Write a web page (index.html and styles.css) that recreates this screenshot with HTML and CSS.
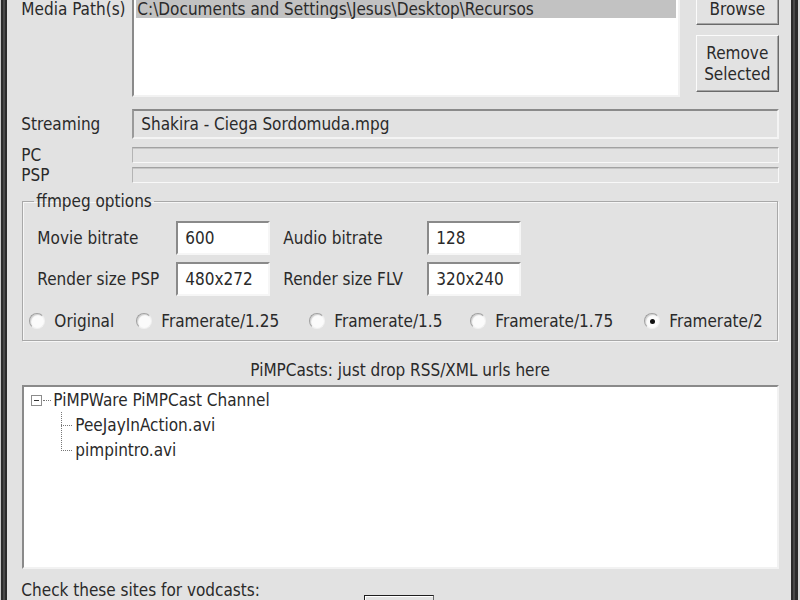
FILE: index.html
```html
<!DOCTYPE html>
<html lang="en">
<head>
    <meta charset="UTF-8">
    <title>PiMP - Media Paths</title>
    <link rel="stylesheet" href="styles.css">
</head>
<body>
    <div class="window">
        <div class="frame-left"></div>
        <div class="content">
            <!-- media paths -->
            <div class="paths-row">
                <div class="label paths-label">Media Path(s)</div>
                <div class="listbox">
                    <div class="list-item selected">C:\Documents and Settings\Jesus\Desktop\Recursos</div>
                </div>
                <div class="button-col">
                    <div class="btn browse">Browse</div>
                    <div class="btn remove">Remove<br>Selected</div>
                </div>
            </div>

            <!-- streaming status -->
            <div class="field-row stream-row">
                <div class="label side-label">Streaming</div>
                <div class="readonly">Shakira - Ciega Sordomuda.mpg</div>
            </div>
            <div class="field-row bar-row pc">
                <div class="label side-label">PC</div>
                <div class="progress"></div>
            </div>
            <div class="field-row bar-row psp">
                <div class="label side-label">PSP</div>
                <div class="progress"></div>
            </div>

            <!-- ffmpeg options -->
            <fieldset class="group">
                <legend>ffmpeg options</legend>
                <div class="opt-row">
                    <div class="label opt-label">Movie bitrate</div>
                    <div class="edit">600</div>
                    <div class="label opt-label2">Audio bitrate</div>
                    <div class="edit">128</div>
                </div>
                <div class="opt-row second">
                    <div class="label opt-label">Render size PSP</div>
                    <div class="edit">480x272</div>
                    <div class="label opt-label2">Render size FLV</div>
                    <div class="edit">320x240</div>
                </div>
                <div class="radio-row">
                    <div class="radio"><span class="dot"></span>Original</div>
                    <div class="radio"><span class="dot"></span>Framerate/1.25</div>
                    <div class="radio"><span class="dot"></span>Framerate/1.5</div>
                    <div class="radio"><span class="dot"></span>Framerate/1.75</div>
                    <div class="radio"><span class="dot checked"></span>Framerate/2</div>
                </div>
            </fieldset>

            <!-- pimpcasts -->
            <div class="label casts-label">PiMPCasts: just drop RSS/XML urls here</div>
            <div class="tree">
                <div class="tree-node">
                    <svg class="expander" width="11" height="11" viewBox="0 0 11 11">
                        <rect x="0.5" y="0.5" width="10" height="10" fill="#fff" stroke="#8c8c8c"/>
                        <line x1="3" y1="5.5" x2="8" y2="5.5" stroke="#333"/>
                    </svg>
                    <span class="dots-h"></span>PiMPWare PiMPCast Channel
                </div>
                <div class="tree-children">
                    <div class="tree-leaf"><span class="dots-h leaf"></span>PeeJayInAction.avi</div>
                    <div class="tree-leaf"><span class="dots-h leaf"></span>pimpintro.avi</div>
                </div>
            </div>

            <div class="label check-label">Check these sites for vodcasts:</div>
            <div class="bottom-btn"></div>
        </div>
        <div class="frame-right"></div>
    </div>
</body>
</html>
```

FILE: styles.css
```css
* {
    margin: 0;
    padding: 0;
    box-sizing: border-box;
}
html, body {
    width: 800px;
    height: 600px;
    overflow: hidden;
}
body {
    background: #e2e2e2;
    color: #2a2a2a;
    font-family: "DejaVu Sans Condensed", "DejaVu Sans", sans-serif;
    font-size: 17px;
}
.window {
    display: flex;
    height: 600px;
}
.frame-left {
    width: 8px;
    background: linear-gradient(to right, #c8c8c8 0, #c8c8c8 1px, #2c2c2c 1px, #2c2c2c 3px, #4a4a4a 3px, #4a4a4a 5px, #2c2c2c 5px, #2c2c2c 7px, #a8a8a8 7px);
}
.frame-right {
    width: 10px;
    background: linear-gradient(to right, #2c2c2c 0, #2c2c2c 2px, #4a4a4a 2px, #4a4a4a 4px, #2c2c2c 4px, #2c2c2c 7px, #dadada 7px);
}
.content {
    flex: 1;
    padding: 0 12px 0 14px;
}
.label {
    line-height: 18px;
    white-space: nowrap;
}

/* media paths */
.paths-row {
    display: flex;
    margin-top: -9px;
    align-items: flex-start;
}
.paths-label {
    width: 111px;
    flex: none;
    margin-top: 9px;
}
.listbox {
    flex: 1;
    height: 99px;
    margin-top: 7px;
    background: #fff;
    border: 2px solid;
    border-color: #8a8a8a #f2f2f2 #f2f2f2 #8a8a8a;
    padding: 0 2px;
}
.list-item {
    line-height: 17px;
    padding: 1px 0 0 1px;
    white-space: nowrap;
}
.list-item.selected {
    background: #c2c2c2;
}
.button-col {
    width: 83px;
    flex: none;
    margin-left: 16px;
    display: flex;
    flex-direction: column;
    gap: 10px;
}
.btn {
    background: #e2e2e2;
    border: 1px solid;
    border-color: #fbfbfb #6a6a6a #6a6a6a #fbfbfb;
    box-shadow: inset -1px -1px 0 #a6a6a6;
    text-align: center;
    display: flex;
    align-items: center;
    justify-content: center;
    line-height: 21px;
}
.browse {
    height: 34px;
    padding-top: 3px;
}
.remove {
    height: 57px;
}

/* streaming */
.field-row {
    display: flex;
    align-items: center;
}
.side-label {
    width: 111px;
    flex: none;
}
.stream-row {
    margin-top: 12px;
    height: 30px;
}
.readonly {
    flex: 1;
    height: 30px;
    border: 2px solid;
    border-color: #8a8a8a #f4f4f4 #f4f4f4 #9a9a9a;
    padding: 0 7px;
    line-height: 26px;
}
.bar-row {
    height: 16px;
}
.pc {
    margin-top: 8px;
}
.psp {
    margin-top: 4px;
}
.progress {
    flex: 1;
    height: 16px;
    border: 1px solid;
    border-color: #a2a2a2 #f8f8f8 #f8f8f8 #b4b4b4;
    box-shadow: inset 0 1px 0 #c6c6c6;
}

/* ffmpeg options */
.group {
    margin: 9px 1px 0 1px;
    border: 1px solid #a8a8a8;
    box-shadow: inset 1px 1px 0 #f6f6f6, 1px 1px 0 #f6f6f6;
    padding: 10px 14px 9px 14px;
}
.group legend {
    padding: 0 2px;
    margin-left: -3px;
    line-height: 19px;
}
.opt-row {
    display: flex;
    align-items: center;
    height: 34px;
}
.opt-row.second {
    margin-top: 7px;
}
.opt-label {
    width: 139px;
}
.opt-label2 {
    width: 144px;
    margin-left: 13px;
}
.edit {
    width: 94px;
    height: 34px;
    background: #fff;
    border: 2px solid;
    border-color: #8a8a8a #f6f6f6 #f6f6f6 #8a8a8a;
    padding: 0 7px;
    line-height: 30px;
}
.radio-row {
    display: grid;
    grid-template-columns: 107px 173px 161px 174px auto;
    margin: 15px 0 0 -8px;
    height: 20px;
    align-items: center;
}
.radio {
    display: flex;
    align-items: center;
    white-space: nowrap;
}
.dot {
    width: 16px;
    height: 16px;
    border-radius: 50%;
    background: #fbfbfb;
    border: 1px solid;
    border-color: #a0a0a0 #f0f0f0 #f0f0f0 #a0a0a0;
    box-shadow: inset 1px 1px 1px #d0d0d0;
    margin-right: 9px;
    position: relative;
}
.dot.checked::after {
    content: "";
    position: absolute;
    left: 5px;
    top: 5px;
    width: 5px;
    height: 5px;
    border-radius: 50%;
    background: #111;
}

/* pimpcasts */
.casts-label {
    text-align: center;
    margin-top: 20px;
}
.tree {
    margin: 6px 0 0 1px;
    height: 184px;
    background: #fff;
    border: 2px solid;
    border-color: #8a8a8a #f2f2f2 #f2f2f2 #8a8a8a;
    padding: 1px 0 0 7px;
    line-height: 25px;
}
.tree-node {
    display: flex;
    align-items: center;
    white-space: nowrap;
}
.expander {
    display: block;
}
.dots-h {
    display: inline-block;
    width: 8px;
    margin: 0 2px 0 1px;
    border-top: 1px dotted #777;
}
.tree-children {
    margin-left: 30px;
    position: relative;
}
.tree-children::before {
    content: "";
    position: absolute;
    left: 0;
    top: -1px;
    height: 39px;
    border-left: 1px dotted #777;
}
.tree-leaf {
    display: flex;
    align-items: center;
    white-space: nowrap;
}
.dots-h.leaf {
    width: 11px;
    margin: 0 3px 0 0;
}

.check-label {
    margin-top: 12px;
}
.bottom-btn {
    width: 70px;
    height: 30px;
    margin: -4px 0 0 343px;
    border: 1px solid #1e1e1e;
    border-right-color: #6a6a6a;
    background: #e2e2e2;
    box-shadow: inset 1px 1px 0 #fff;
}
```
